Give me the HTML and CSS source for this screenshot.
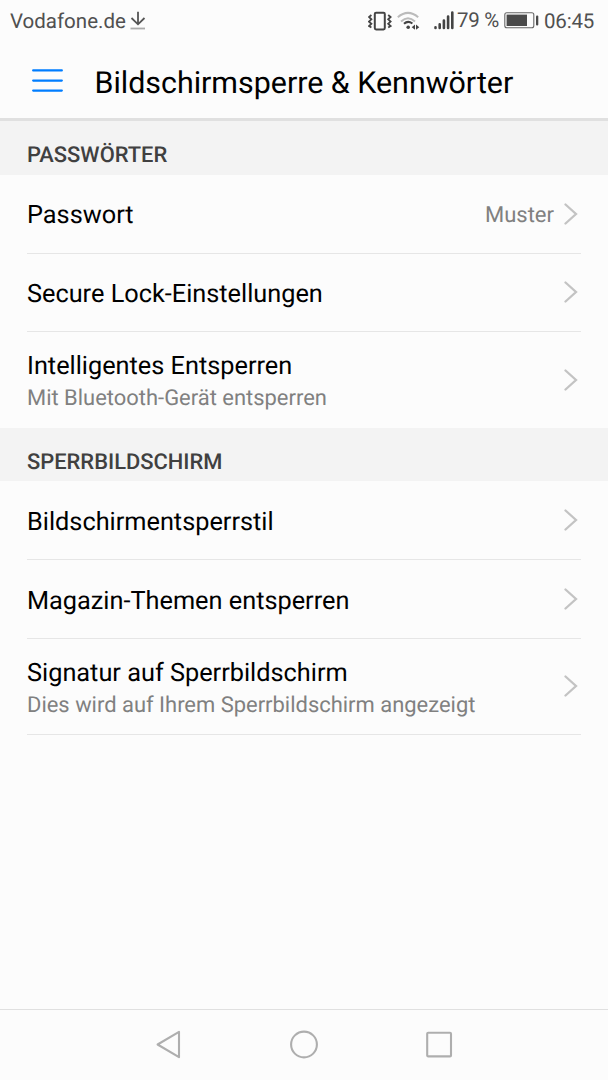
FILE: index.html
```html
<!DOCTYPE html>
<html lang="de">
  <head>
    <title>Bildschirmsperre &amp; Kennwörter</title>
    <meta charset="utf-8">
    <link rel="stylesheet" href="styles.css">
  </head>
  <body>
    <div class="statusbar">
      <span class="carrier">Vodafone.de</span>
      <svg class="download" width="16" height="20" viewBox="0 0 16 20" fill="none" stroke-width="1.8">
        <path d="M8 .8V13M1.5 7L8 13.3L14.5 7" stroke="#555"/>
        <path d="M.5 17.5H15" stroke="#aaa"/>
      </svg>
      <svg class="vibrate" width="24" height="20" viewBox="0 0 24 20" fill="none" stroke="#444">
        <rect x="6.8" y="1.8" width="10" height="16.6" rx="1.3" stroke-width="2"/>
        <path d="M3.4 4L1 6L3.4 8.3L1 10.6L3.4 12.8L1 15L3.4 16.5M20.2 4L22.6 6L20.2 8.3L22.6 10.6L20.2 12.8L22.6 15L20.2 16.5" stroke-width="1.8"/>
      </svg>
      <svg class="wifi" width="23" height="20" viewBox="0 0 23 20" fill="none">
        <path d="M.8 6.2Q11 -2.4 21.2 6.2M4 10.5Q11 4 18 10.5" stroke="#bbb" stroke-width="2"/>
        <path d="M7 12.8Q11 9 15.4 12.6" stroke="#444" stroke-width="2"/>
        <circle cx="11.2" cy="16.3" r="1.8" fill="#444"/>
        <path d="M18 13.6V18.8L14.7 16.2ZM19 13.6V18.8L22.3 16.2Z" fill="#444"/>
      </svg>
      <svg class="signal" width="20" height="20" viewBox="0 0 20 20" fill="none" stroke="#444" stroke-width="2.6" stroke-linecap="round">
        <path d="M1.5 16.4V17M5.7 13.4V17M9.9 9.6V17M14.1 5.6V17M18.3 1.6V17"/>
      </svg>
      <span class="percent">79 %</span>
      <svg class="battery" width="35" height="18" viewBox="0 0 35 18">
        <rect x=".8" y=".8" width="29" height="15" rx="2" fill="none" stroke="#666" stroke-width="1.1"/>
        <rect x="2.6" y="2.6" width="20.4" height="11.4" fill="#4a4a4a"/>
        <rect x="32" y="3.5" width="2.3" height="10" rx="1" fill="#4a4a4a"/>
      </svg>
      <span class="clock">06:45</span>
    </div>

    <header class="titlebar">
      <svg width="31" height="24" viewBox="0 0 31 24" stroke="#007dff" stroke-width="2.3" stroke-linecap="round">
        <path d="M1.2 1.4H29.8M1.2 11.6H29.8M1.2 21.6H29.8"/>
      </svg>
      <h1>Bildschirmsperre &amp; Kennwörter</h1>
    </header>

    <main>
      <h2>PASSWÖRTER</h2>
      <ul>
        <li>
          <div class="label">Passwort</div>
          <span class="value">Muster</span>
          <svg class="chevron" viewBox="0 0 14 22"><path d="M1.5 1.5L12 11L1.5 20.5"/></svg>
        </li>
        <li>
          <div class="label">Secure Lock-Einstellungen</div>
          <svg class="chevron" viewBox="0 0 14 22"><path d="M1.5 1.5L12 11L1.5 20.5"/></svg>
        </li>
        <li class="tall">
          <div class="label">Intelligentes Entsperren<small>Mit Bluetooth-Gerät entsperren</small></div>
          <svg class="chevron" viewBox="0 0 14 22"><path d="M1.5 1.5L12 11L1.5 20.5"/></svg>
        </li>
      </ul>

      <h2 class="second">SPERRBILDSCHIRM</h2>
      <ul class="lockscreen">
        <li>
          <div class="label">Bildschirmentsperrstil</div>
          <svg class="chevron" viewBox="0 0 14 22"><path d="M1.5 1.5L12 11L1.5 20.5"/></svg>
        </li>
        <li>
          <div class="label">Magazin-Themen entsperren</div>
          <svg class="chevron" viewBox="0 0 14 22"><path d="M1.5 1.5L12 11L1.5 20.5"/></svg>
        </li>
        <li class="tall">
          <div class="label">Signatur auf Sperrbildschirm<small>Dies wird auf Ihrem Sperrbildschirm angezeigt</small></div>
          <svg class="chevron" viewBox="0 0 14 22"><path d="M1.5 1.5L12 11L1.5 20.5"/></svg>
        </li>
      </ul>
    </main>

    <nav class="navbar">
      <svg viewBox="0 0 30 30"><path d="M3.6 14.5L25 1.8V27.2Z"/></svg>
      <svg viewBox="0 0 30 30"><circle cx="15" cy="14.5" r="12.9"/></svg>
      <svg viewBox="0 0 30 30"><rect x="3.2" y="2.8" width="23.8" height="23.6" rx="1"/></svg>
    </nav>
  </body>
</html>
```

FILE: styles.css
```css
* {
  box-sizing: border-box;
}
body {
  display: flex;
  flex-direction: column;
  height: 1080px;
  margin: 0;
  background: #fcfcfc;
  color: #000;
  font-family: Roboto, "Liberation Sans", sans-serif;
  text-rendering: geometricPrecision;
}
svg {
  flex: none;
}

/* status bar */
.statusbar {
  display: flex;
  align-items: center;
  height: 41px;
  padding: 0 14px 0 10px;
  color: #505050;
  font-size: 20.5px;
  line-height: 24px;
  white-space: nowrap;
}
.carrier {
  padding-top: 2px;
}
.download {
  margin-left: 4px;
}
.vibrate {
  margin-left: auto;
}
.wifi {
  margin-left: 5px;
}
.signal {
  margin-left: 14px;
}
.percent {
  width: 43px;
  margin-left: 3px;
  letter-spacing: -.3px;
}
.battery {
  margin-left: 4px;
}
.clock {
  width: 50px;
  margin-left: 5px;
  padding-top: 2px;
  letter-spacing: -.2px;
}

.titlebar {
  display: flex;
  align-items: center;
  height: 80px;
  padding: 3px 32px 0;
  border-bottom: 3px solid #e0e0e0;
}
h1 {
  margin: 5px 0 0 31.5px;
  font-size: 30.4px;
  font-weight: 400;
  white-space: nowrap;
}

/* settings list */
main {
  flex: 1;
}
h2 {
  height: 54px;
  margin: 0;
  padding: 9px 27px 0;
  background: #f3f3f3;
  color: #404040;
  font-size: 21.9px;
  font-weight: 500;
  line-height: 52px;
}
h2.second {
  height: 53px;
}
ul {
  margin: 0;
  padding: 0 27px;
  list-style: none;
}
li {
  display: flex;
  align-items: center;
  height: 79px;
  padding-bottom: 1px;
  border-bottom: 1.5px solid #e6e6e6;
}
li:nth-child(2) {
  height: 78px;
}
.lockscreen li:nth-child(2) {
  height: 79px;
}
li.tall {
  height: 97px;
}
.lockscreen li.tall {
  height: 96px;
}
li.tall:last-child {
  border-bottom: none;
  height: 96px;
}
.lockscreen li.tall:last-child {
  border-bottom: 1.5px solid #e6e6e6;
}
.label {
  flex: 1;
  padding-top: 5px;
  font-size: 25.3px;
  line-height: 32px;
}
.tall .label {
  padding-top: 7px;
}
.lockscreen .label {
  padding-top: 6px;
}
.lockscreen .tall .label {
  padding-top: 7px;
}
small {
  display: block;
  color: #808080;
  font-size: 21.95px;
  line-height: 32px;
}
.value {
  padding-top: 3px;
  color: #808080;
  font-size: 22px;
}
.chevron {
  width: 14px;
  height: 22px;
  margin: 0 3px 0 10px;
  fill: none;
  stroke: #c3c3c3;
  stroke-width: 2.3;
  stroke-linecap: round;
}

.navbar {
  display: flex;
  justify-content: center;
  align-items: center;
  gap: 105px;
  height: 71px;
  border-top: 1px solid #e0e0e0;
}
.navbar svg {
  width: 30px;
  height: 30px;
  fill: none;
  stroke: #aeaeae;
  stroke-width: 2.1;
  stroke-linejoin: round;
}
```
